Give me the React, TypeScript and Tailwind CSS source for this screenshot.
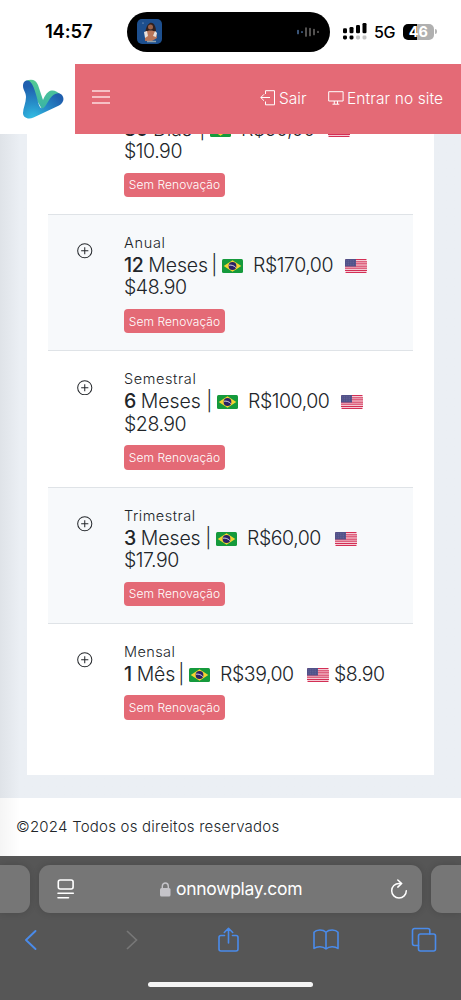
import { ReactNode } from "react";

type Plan = {
  name?: string;
  amount: string;
  unit: string;
  brl: string;
  usd: string;
  unitClass: string;
  brlClass: string;
  nameClass?: string;
  inlineUsd?: boolean;
};

const plans: Plan[] = [
  { amount: "30", unit: "Dias", brl: "R$50,00", usd: "$10.90", unitClass: "w-[86px]", brlClass: "w-[87px]" },
  { name: "Anual", amount: "12", unit: "Meses", brl: "R$170,00", usd: "$48.90", unitClass: "w-[98px]", brlClass: "w-[92px]", nameClass: "tracking-[0.7px]" },
  { name: "Semestral", amount: "6", unit: "Meses", brl: "R$100,00", usd: "$28.90", unitClass: "w-[93px]", brlClass: "w-[93px]", nameClass: "tracking-[0.6px]" },
  { name: "Trimestral", amount: "3", unit: "Meses", brl: "R$60,00", usd: "$17.90", unitClass: "w-[92px]", brlClass: "w-[88px]", nameClass: "tracking-[0.5px]" },
  { name: "Mensal", amount: "1", unit: "Mês", brl: "R$39,00", usd: "$8.90", unitClass: "w-[65px]", brlClass: "w-[87px]", nameClass: "tracking-[0.4px]", inlineUsd: true },
];

function FlagBR() {
  return (
    <svg className="mr-[10px] mt-[2px] inline-block h-[14px] w-[21px] shrink-0" viewBox="0 0 21 14">
      <rect width="21" height="14" rx="1.5" fill="#159a3c" />
      <path d="M10.5 1.3 19.3 7l-8.8 5.7L1.7 7z" fill="#f5d432" />
      <circle cx="10.5" cy="7" r="3.9" fill="#2b2166" />
      <path d="M7 6.2c2.6-.4 5 .4 6.800 2.400" stroke="#fff" strokeWidth=".8" fill="none" />
    </svg>
  );
}

function FlagUS() {
  return (
    <svg className="mt-[2px] inline-block h-[14px] w-[22px] shrink-0" viewBox="0 0 22 14">
      <rect width="22" height="14" rx="1.5" fill="#fff" />
      <path d="M.5.6h21M0 2.75h22M0 4.9h22M0 7h22M0 9.15h22M0 11.3h22M.5 13.4h21" stroke="#d32f55" strokeWidth="1.25" />
      <path d="M1.2 0H11v7.5H0V1.2Q0 0 1.2 0z" fill="#515189" />
      <path d="M1.5 1.800h9M1.500 3.800h9M1.500 5.800h9" stroke="#8d8db5" strokeWidth=".5" strokeDasharray=".7 1" />
    </svg>
  );
}

function PlanRow({ plan, striped }: { plan: Plan; striped: boolean }) {
  return (
    <div className={`flex h-[136.35px] border-t border-[#dfe3e7] pt-[17px] ${striped ? "bg-[#f7f9fb]" : "bg-white"}`}>
      <div className="w-[76px] shrink-0 pl-[29px] pt-[11.5px]">
        <svg className="size-[15.5px]" viewBox="0 0 16 16" fill="none" stroke="#25282c" strokeWidth="1.05">
          <circle cx="8" cy="8" r="7.3" />
          <path d="M8 4.3v7.4M4.3 8h7.4" />
        </svg>
      </div>
      <div className="min-w-0 grow whitespace-nowrap">
        <div className="h-[22px] text-[14.5px] leading-[22px]">
          {plan.name ? <span className={plan.nameClass}>{plan.name}</span> : null}
        </div>
        <div className="text-[19.5px] leading-[22.5px] tracking-[-0.45px]">
          <div className="flex items-center">
            <span className={`flex shrink-0 items-center ${plan.unitClass}`}>
              <b className="mr-[5px] font-medium">{plan.amount}</b>
              <span className="tracking-[-0.1px]">{plan.unit}</span>
              <span className="ml-auto mr-[5px]">|</span>
            </span>
            <FlagBR />
            <span className={`shrink-0 ${plan.brlClass}`}>{plan.brl}</span>
            <FlagUS />
            {plan.inlineUsd ? <span className="ml-[5px]">{plan.usd}</span> : null}
          </div>
          {plan.inlineUsd ? null : <div>{plan.usd}</div>}
        </div>
        <div className="mt-[10px] flex h-[24.5px] w-[101px] items-center justify-center rounded-[4px] bg-[#e46a76] pt-px text-[12px] tracking-[0.08px] text-white">
          Sem Renovação
        </div>
      </div>
    </div>
  );
}

function StatusBar() {
  return (
    <div className="flex h-[63.5px] shrink-0 items-center bg-white text-black">
      <div className="w-[127px] pl-[45px] font-['Inter'] text-[18.5px] font-semibold tracking-[-0.2px]">14:57</div>
      <div className="flex h-[39.5px] w-[203px] items-center justify-between rounded-full bg-black pl-[10px] pr-[10px]">
        <svg className="h-[25px] w-[25px]" viewBox="0 0 25 25">
          <rect width="25" height="25" rx="5" fill="#1d4f8e" />
          <path d="M8 14c1-3 1-8 5-10 4-1 6 4 6 8l-2 6H9z" fill="#30201f" />
          <circle cx="13.5" cy="8" r="2.500" fill="#9b6249" />
          <path d="M8 13c3-2 8-2 11 0l1 6-5 3H8z" fill="#b87558" />
          <path d="m7 13 3-1 1 5-3 2zm11-1 2 2-1 4-3-1z" fill="#e9e1dd" />
          <path d="M10 22.500h9" stroke="#91a3ad" strokeWidth="1.500" />
          <circle cx="6" cy="4" r=".6" fill="#b8cbe0" />
        </svg>
        <svg className="h-[12px] w-[23px]" viewBox="0 0 23 12" strokeLinecap="round" strokeWidth="1.700">
          <path d="M1 4.500v3M5 5.800v.4" stroke="#45658f" />
          <path d="M9 2v8M13 2.500v7M17 3.500v5M21 5.700v.5" stroke="#62605f" />
        </svg>
      </div>
      <svg className="ml-[13px] h-[17px] w-[24px]" viewBox="0 0 24 17">
        <g fill="#000">
          <rect y="5.2" width="4" height="5" rx="1.3" />
          <rect x="6.5" y="4" width="4" height="6.2" rx="1.3" />
          <rect x="13" y="2" width="4" height="8.2" rx="1.3" />
          <rect x="19.5" width="4" height="10.2" rx="1.3" />
          <rect y="12.5" width="4" height="4" rx="1.4" />
          <rect x="6.5" y="12.5" width="4" height="4" rx="1.4" />
        </g>
        <g fill="#c4c4c4">
          <rect x="13" y="12.5" width="4" height="4" rx="1.4" />
          <rect x="19.5" y="12.5" width="4" height="4" rx="1.4" />
        </g>
      </svg>
      <span className="ml-[7px] w-[22px] font-['Inter'] text-[16px] font-medium tracking-[-0.5px]">5G</span>
      <div className="ml-[7px] flex h-[16px] w-[30.5px] items-center justify-center rounded-[5px] bg-linear-to-r from-black from-46% to-[#b0b0b0] to-46% font-['Inter'] text-[14.5px] font-bold text-white">
        46
      </div>
      <div className="ml-[1px] h-[5px] w-[2px] rounded-r-full bg-[#b5b5b5]" />
    </div>
  );
}

function Header() {
  return (
    <header className="flex h-[70.5px] shrink-0">
      <div className="w-[75px] bg-white pl-[22px] pt-[15.5px]">
        <svg className="h-[41px] w-[42px]" viewBox="0 0 42 41">
          <defs>
            <radialGradient id="logoBlue" cx=".25" cy="1" r=".85">
              <stop stopColor="#34bfe4" />
              <stop offset=".45" stopColor="#2790ca" />
              <stop offset="1" stopColor="#1f5fae" />
            </radialGradient>
            <linearGradient id="logoGreen" x1="0" y1="0" x2="0" y2="1">
              <stop stopColor="#55ca94" />
              <stop offset="1" stopColor="#37b2a6" />
            </linearGradient>
          </defs>
          <path d="M4 2C9-.5 14 .5 16 6l5 15c2-5 5-9 8.500-9.500 3-.5 5.500 1 8 3L21 32z" fill="url(#logoGreen)" />
          <path d="M1 7C1 1.500 5.500.5 8 2.500c3 3 4.500 8 6 13l2.300 8.500c1.700 6.500 4.700 7 7.700 2l4-6.500c3-4.500 8.500-7.500 12-3.500 2.800 3.500 1.500 7.800-3 10.500L11.500 38.500C6 41 1 38.500 1 34c0-5 3-10 3-16C4 13 1 11 1 7z" fill="url(#logoBlue)" />
        </svg>
      </div>
      <div className="flex grow items-center bg-[#e46a76] text-white">
        <svg className="-mt-[3px] ml-[17px] h-[16px] w-[18px]" viewBox="0 0 18 16" stroke="#f6c0c5" strokeWidth="2">
          <path d="M0 2h18M0 8h18M0 14h18" />
        </svg>
        <svg className="-mt-[2px] ml-[150px] h-[16px] w-[16px]" viewBox="0 0 16 16" fill="none" stroke="currentColor">
          <path d="M5.500 4V.7h9v14.100h-9v-3.300M10 7.500H.8M4 4.300.8 7.500 4 10.700" />
        </svg>
        <span className="ml-[3px] w-[28px] whitespace-nowrap text-[15.5px]">Sair</span>
        <svg className="-mt-[2px] ml-[21px] h-[14px] w-[16px]" viewBox="0 0 16 14" fill="none" stroke="currentColor">
          <path d="M.7.7h14.400v9.300H.7zM6.300 10v3M9.500 10v3M4.500 13.200h6.800" />
        </svg>
        <span className="ml-[3px] whitespace-nowrap text-[15.5px] tracking-[0.1px]">Entrar no site</span>
      </div>
    </header>
  );
}

function ToolIcon({ children, className }: { children: ReactNode; className: string }) {
  return (
    <svg className={className} viewBox="0 0 26 26" fill="none" stroke="#4a8bea" strokeWidth="1.6" strokeLinecap="round" strokeLinejoin="round">
      {children}
    </svg>
  );
}

function BrowserBar() {
  return (
    <div className="flex h-[144px] shrink-0 flex-col bg-[#565656]">
      <div className="flex h-[57px] gap-[9px] pt-[9px]">
        <div className="w-[30px] rounded-r-[11px] bg-[#767676] shadow-[0_0_7px_rgba(0,0,0,0.15)]" />
        <div className="flex w-[383px] items-center rounded-[11px] bg-[#767676] text-white shadow-[0_0_7px_rgba(0,0,0,0.15)]">
          <svg className="ml-[18px] h-[20px] w-[18px]" viewBox="0 0 18 20" fill="none" stroke="currentColor" strokeWidth="1.600" strokeLinecap="round">
            <rect x="1.300" y="1" width="14.800" height="9" rx="2" />
            <path d="M1 14.300h15.300M1 18.700h10.500" />
          </svg>
          <svg className="ml-[85px] h-[15px] w-[11px]" viewBox="0 0 11 15">
            <rect y="6" width="10.500" height="8.500" rx="1.500" fill="#c5c4c9" />
            <path d="M2.300 7V4.200c0-4.300 6-4.300 6 0V7" fill="none" stroke="#c5c4c9" strokeWidth="1.400" />
          </svg>
          <span className="ml-[5px] w-[126px] whitespace-nowrap font-['Inter'] text-[17.5px] font-normal tracking-[-0.3px]">onnowplay.com</span>
          <svg className="ml-[88px] h-[20px] w-[18px]" viewBox="0 0 18 20" fill="none" stroke="currentColor" strokeWidth="1.500" strokeLinecap="round" strokeLinejoin="round">
            <path d="M10.500 4.400H9a7.300 7.300 0 1 0 7.300 7.300M7.800 1l3.900 3.500-3.900 3.600" />
          </svg>
        </div>
        <div className="grow rounded-l-[11px] bg-[#767676] shadow-[0_0_7px_rgba(0,0,0,0.15)]" />
      </div>
      <div className="flex h-[54px] items-center pl-[18px]">
        <ToolIcon className="size-[26px]">
          <path d="M17.500 4 8 13l9.500 9" strokeWidth="1.900" />
        </ToolIcon>
        <svg className="ml-[75px] size-[26px]" viewBox="0 0 26 26" fill="none" stroke="#777" strokeWidth="1.700">
          <path d="m8 4 9.500 9L8 22" />
        </svg>
        <ToolIcon className="ml-[70px] size-[26px]">
          <path d="M9.500 8.500H6a2 2 0 0 0-2 2V22a2 2 0 0 0 2 2h15a2 2 0 0 0 2-2V10.500a2 2 0 0 0-2-2h-3.500M13.500 16V1.500M9.300 5.500l4.200-4.200 4.200 4.200" />
        </ToolIcon>
        <ToolIcon className="ml-[72px] size-[26px]">
          <path d="M13 5.200C10 2.200 3.500 2.200 1 5.200v16.300c3-2.500 9-2.500 12 .5 3-3 9-3 12-.5V5.200c-2.500-3-9-3-12 0zM13 5.200V22" />
        </ToolIcon>
        <ToolIcon className="ml-[72px] size-[26px]">
          <path d="M7.500 18.500H3.500a2 2 0 0 1-2-2V3.500a2 2 0 0 1 2-2h13.300a2 2 0 0 1 2 2V7" />
          <rect x="7.500" y="7" width="17" height="17" rx="2" />
        </ToolIcon>
      </div>
      <div className="mx-auto mt-[15px] h-[5px] w-[165px] rounded-full bg-[#f4f4f4]" />
    </div>
  );
}

export default function App() {
  return (
    <div className="flex h-[1000px] w-[461px] flex-col overflow-hidden bg-white font-['Inter','Liberation_Sans',sans-serif] font-light text-[#212529]">
      <StatusBar />
      <Header />
      <main className="h-[664px] shrink-0 overflow-hidden bg-[#ebeff4] bg-linear-to-r from-[#dfe3e8] to-[#ebeff4] to-[20px]">
        <div className="ml-[27px] h-[641px] w-[407px] overflow-hidden bg-white px-[21px]">
          <div className="mt-[-56.5px]">
            {plans.map((plan, i) => (
              <PlanRow key={plan.usd} plan={plan} striped={i % 2 === 1} />
            ))}
          </div>
        </div>
      </main>
      <footer className="h-[58px] shrink-0 bg-white bg-linear-to-r from-[#f5f5f5] to-white to-[20px] pl-[16px] text-[15px] leading-[58px] tracking-[0.22px]">
        ©2024 Todos os direitos reservados
      </footer>
      <BrowserBar />
    </div>
  );
}
